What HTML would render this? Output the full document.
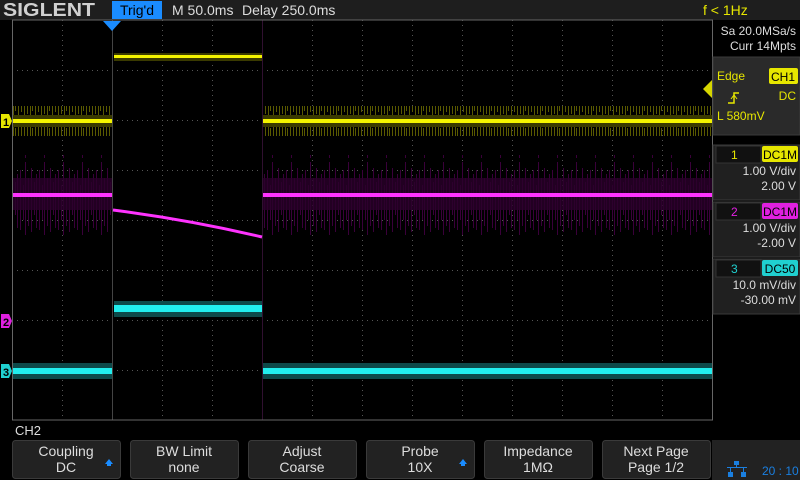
<!DOCTYPE html>
<html><head><meta charset="utf-8"><style>
body{margin:0;background:#000;width:800px;height:480px;overflow:hidden;font-family:"Liberation Sans",sans-serif;}
svg{display:block}
</style></head><body>
<svg width="800" height="480" xmlns="http://www.w3.org/2000/svg" font-family="Liberation Sans, sans-serif">
<defs>
<pattern id="ny" x="0" y="0" width="17" height="30" patternUnits="userSpaceOnUse">
<g stroke="#5a5a00" stroke-width="1">
<line x1="1.5" y1="3" x2="1.5" y2="26"/><line x1="4.5" y1="7" x2="4.5" y2="22"/><line x1="7.5" y1="1" x2="7.5" y2="28"/>
<line x1="10.5" y1="6" x2="10.5" y2="24"/><line x1="13.5" y1="4" x2="13.5" y2="25"/><line x1="15.5" y1="8" x2="15.5" y2="21"/></g>
</pattern>
<pattern id="nm" x="0" y="0" width="19" height="80" patternUnits="userSpaceOnUse">
<g stroke="#3a003a" stroke-width="1">
<line x1="1.5" y1="10" x2="1.5" y2="70"/><line x1="4.5" y1="25" x2="4.5" y2="60"/><line x1="6.5" y1="2" x2="6.5" y2="78"/>
<line x1="9.5" y1="18" x2="9.5" y2="66"/><line x1="12.5" y1="8" x2="12.5" y2="72"/><line x1="15.5" y1="22" x2="15.5" y2="55"/><line x1="17.5" y1="14" x2="17.5" y2="68"/></g>
</pattern>
</defs>
<rect width="800" height="480" fill="#000"/>
<rect x="0" y="0" width="800" height="20" fill="#1e1e1e"/>
<text x="3" y="16" font-size="18" font-weight="bold" fill="#d0d0d0" textLength="92" lengthAdjust="spacingAndGlyphs">SIGLENT</text>
<rect x="112" y="1" width="50" height="18" fill="#1a8cff"/>
<text x="137" y="15" font-size="14" fill="#000" text-anchor="middle">Trig'd</text>
<text x="172" y="15" font-size="14" fill="#ddd">M 50.0ms</text>
<text x="242" y="15" font-size="14" fill="#ddd">Delay 250.0ms</text>
<text x="703" y="15" font-size="14" fill="#e6e600">f &lt; 1Hz</text>
<g stroke="#555" stroke-width="1" stroke-dasharray="1,4">
<line x1="62.5" y1="20" x2="62.5" y2="420"/><line x1="162.5" y1="20" x2="162.5" y2="420"/><line x1="212.5" y1="20" x2="212.5" y2="420"/>
<line x1="312.5" y1="20" x2="312.5" y2="420"/><line x1="362.5" y1="20" x2="362.5" y2="420"/><line x1="412.5" y1="20" x2="412.5" y2="420"/>
<line x1="462.5" y1="20" x2="462.5" y2="420"/><line x1="512.5" y1="20" x2="512.5" y2="420"/><line x1="562.5" y1="20" x2="562.5" y2="420"/>
<line x1="612.5" y1="20" x2="612.5" y2="420"/><line x1="662.5" y1="20" x2="662.5" y2="420"/>
<line x1="12" y1="70.5" x2="712" y2="70.5"/><line x1="12" y1="120.5" x2="712" y2="120.5"/><line x1="12" y1="170.5" x2="712" y2="170.5"/>
<line x1="12" y1="220.5" x2="712" y2="220.5"/><line x1="12" y1="270.5" x2="712" y2="270.5"/><line x1="12" y1="320.5" x2="712" y2="320.5"/>
<line x1="12" y1="370.5" x2="712" y2="370.5"/>
</g>
<line x1="112.5" y1="20" x2="112.5" y2="420" stroke="#444"/>
<line x1="262.5" y1="20" x2="262.5" y2="420" stroke="#301030"/>
<rect x="12.5" y="20" width="700" height="400" fill="none" stroke="#666"/>
<!-- yellow -->
<rect x="13" y="106" width="99" height="30" fill="url(#ny)"/>
<rect x="263" y="106" width="449" height="30" fill="url(#ny)"/>
<rect x="13" y="115" width="99" height="12" fill="#3a3a00"/>
<rect x="263" y="115" width="449" height="12" fill="#3a3a00"/>
<rect x="13" y="119" width="99" height="4" fill="#f4f400"/>
<rect x="263" y="119" width="449" height="4" fill="#f4f400"/>
<rect x="114" y="53" width="148" height="8" fill="#3a3a00"/>
<rect x="114" y="55" width="148" height="3" fill="#f4f400"/>
<!-- magenta -->
<rect x="13" y="155" width="99" height="80" fill="url(#nm)"/>
<rect x="263" y="155" width="449" height="80" fill="url(#nm)"/>
<rect x="13" y="178" width="99" height="32" fill="#2a002a" opacity="0.8"/>
<rect x="263" y="178" width="449" height="32" fill="#2a002a" opacity="0.8"/>
<rect x="13" y="193" width="99" height="4" fill="#ff33ff"/>
<rect x="263" y="193" width="449" height="4" fill="#ff33ff"/>
<path d="M113 210 Q190 220 262 237" stroke="#ff33ff" stroke-width="3" fill="none"/>
<!-- cyan -->
<rect x="13" y="363" width="99" height="16" fill="#0d4a4a"/>
<rect x="263" y="363" width="449" height="16" fill="#0d4a4a"/>
<rect x="13" y="368" width="99" height="6" fill="#22eeee"/>
<rect x="263" y="368" width="449" height="6" fill="#22eeee"/>
<rect x="114" y="301" width="148" height="16" fill="#0d4a4a"/>
<rect x="114" y="305" width="148" height="7" fill="#22eeee"/>
<path d="M1 114h8l3 7-3 7h-8z" fill="#e6e600"/><text x="3" y="126" font-size="11" fill="#000" font-weight="bold">1</text>
<path d="M1 314h8l3 7-3 7h-8z" fill="#e020e0"/><text x="3" y="326" font-size="11" fill="#000" font-weight="bold">2</text>
<path d="M1 364h8l3 7-3 7h-8z" fill="#20d0d0"/><text x="3" y="376" font-size="11" fill="#000" font-weight="bold">3</text>
<path d="M103 21h18l-9 10z" fill="#1a8cff"/>
<path d="M712 80l-9 9 9 9z" fill="#d6d600"/>
<rect x="713" y="20" width="87" height="36" fill="#000"/>
<text x="796" y="35" font-size="12" fill="#ddd" text-anchor="end">Sa 20.0MSa/s</text>
<text x="796" y="50" font-size="12" fill="#ddd" text-anchor="end">Curr 14Mpts</text>
<rect x="713" y="57" width="87" height="78" fill="#2a2a2a" stroke="#3a3a3a"/>
<text x="717" y="80" font-size="12" fill="#e6e600">Edge</text>
<rect x="769" y="68" width="29" height="16" rx="2" fill="#e6e600"/>
<text x="783" y="81" font-size="12" fill="#000" text-anchor="middle">CH1</text>
<path d="M728 103h6v-10h5" stroke="#e6e600" stroke-width="1.5" fill="none"/><path d="M731 99l3-4 3 4" stroke="#e6e600" fill="none"/>
<text x="796" y="100" font-size="12" fill="#e6e600" text-anchor="end">DC</text>
<text x="717" y="120" font-size="12" fill="#e6e600">L  580mV</text>
<g font-size="12">
<rect x="713" y="145" width="87" height="55" fill="#202020" stroke="#3a3a3a"/>
<rect x="716" y="146" width="45" height="17" fill="#111" stroke="#333"/>
<text x="731" y="159" fill="#e6e600">1</text>
<rect x="762" y="146" width="36" height="16" rx="2" fill="#e6e600"/><text x="780" y="159" fill="#000" text-anchor="middle">DC1M</text>
<text x="796" y="175" fill="#ddd" text-anchor="end">1.00 V/div</text><text x="796" y="190" fill="#ddd" text-anchor="end">2.00 V</text>
<rect x="713" y="202" width="87" height="55" fill="#202020" stroke="#3a3a3a"/>
<rect x="716" y="203" width="45" height="17" fill="#111" stroke="#333"/>
<text x="731" y="216" fill="#e020e0">2</text>
<rect x="762" y="203" width="36" height="16" rx="2" fill="#e020e0"/><text x="780" y="216" fill="#000" text-anchor="middle">DC1M</text>
<text x="796" y="232" fill="#ddd" text-anchor="end">1.00 V/div</text><text x="796" y="247" fill="#ddd" text-anchor="end">-2.00 V</text>
<rect x="713" y="259" width="87" height="55" fill="#202020" stroke="#3a3a3a"/>
<rect x="716" y="260" width="45" height="17" fill="#111" stroke="#333"/>
<text x="731" y="273" fill="#20d0d0">3</text>
<rect x="762" y="260" width="36" height="16" rx="2" fill="#20d0d0"/><text x="780" y="273" fill="#000" text-anchor="middle">DC50</text>
<text x="796" y="289" fill="#ddd" text-anchor="end">10.0 mV/div</text><text x="796" y="304" fill="#ddd" text-anchor="end">-30.00 mV</text>
</g>
<text x="15" y="435" font-size="13" fill="#ddd">CH2</text>
<g font-size="14" fill="#ddd" text-anchor="middle">
<rect x="12.5" y="440.5" width="108" height="38" rx="3" fill="#222" stroke="#3a3a3a"/><text x="66" y="456">Coupling</text><text x="66" y="472">DC</text>
<rect x="130.5" y="440.5" width="108" height="38" rx="3" fill="#222" stroke="#3a3a3a"/><text x="184" y="456">BW Limit</text><text x="184" y="472">none</text>
<rect x="248.5" y="440.5" width="108" height="38" rx="3" fill="#222" stroke="#3a3a3a"/><text x="302" y="456">Adjust</text><text x="302" y="472">Coarse</text>
<rect x="366.5" y="440.5" width="108" height="38" rx="3" fill="#222" stroke="#3a3a3a"/><text x="420" y="456">Probe</text><text x="420" y="472">10X</text>
<rect x="484.5" y="440.5" width="108" height="38" rx="3" fill="#222" stroke="#3a3a3a"/><text x="538" y="456">Impedance</text><text x="538" y="472">1MΩ</text>
<rect x="602.5" y="440.5" width="108" height="38" rx="3" fill="#222" stroke="#3a3a3a"/><text x="656" y="456">Next Page</text><text x="656" y="472">Page 1/2</text>
</g>
<path d="M105 464l4-5 4 5h-2v2h-4v-2z" fill="#1a8cff"/>
<path d="M459 464l4-5 4 5h-2v2h-4v-2z" fill="#1a8cff"/>
<rect x="712" y="440" width="88" height="40" fill="#222"/>
<g fill="#1a7fe0"><rect x="734" y="461" width="5" height="4"/><rect x="728" y="472" width="5" height="5"/><rect x="741" y="472" width="5" height="5"/><rect x="727" y="467" width="20" height="1"/><rect x="736" y="465" width="1" height="3"/><rect x="730" y="467" width="1" height="5"/><rect x="743" y="467" width="1" height="5"/></g>
<text x="762" y="475" font-size="12" fill="#1a7fe0">20 : 10</text>
</svg>
</body></html>
